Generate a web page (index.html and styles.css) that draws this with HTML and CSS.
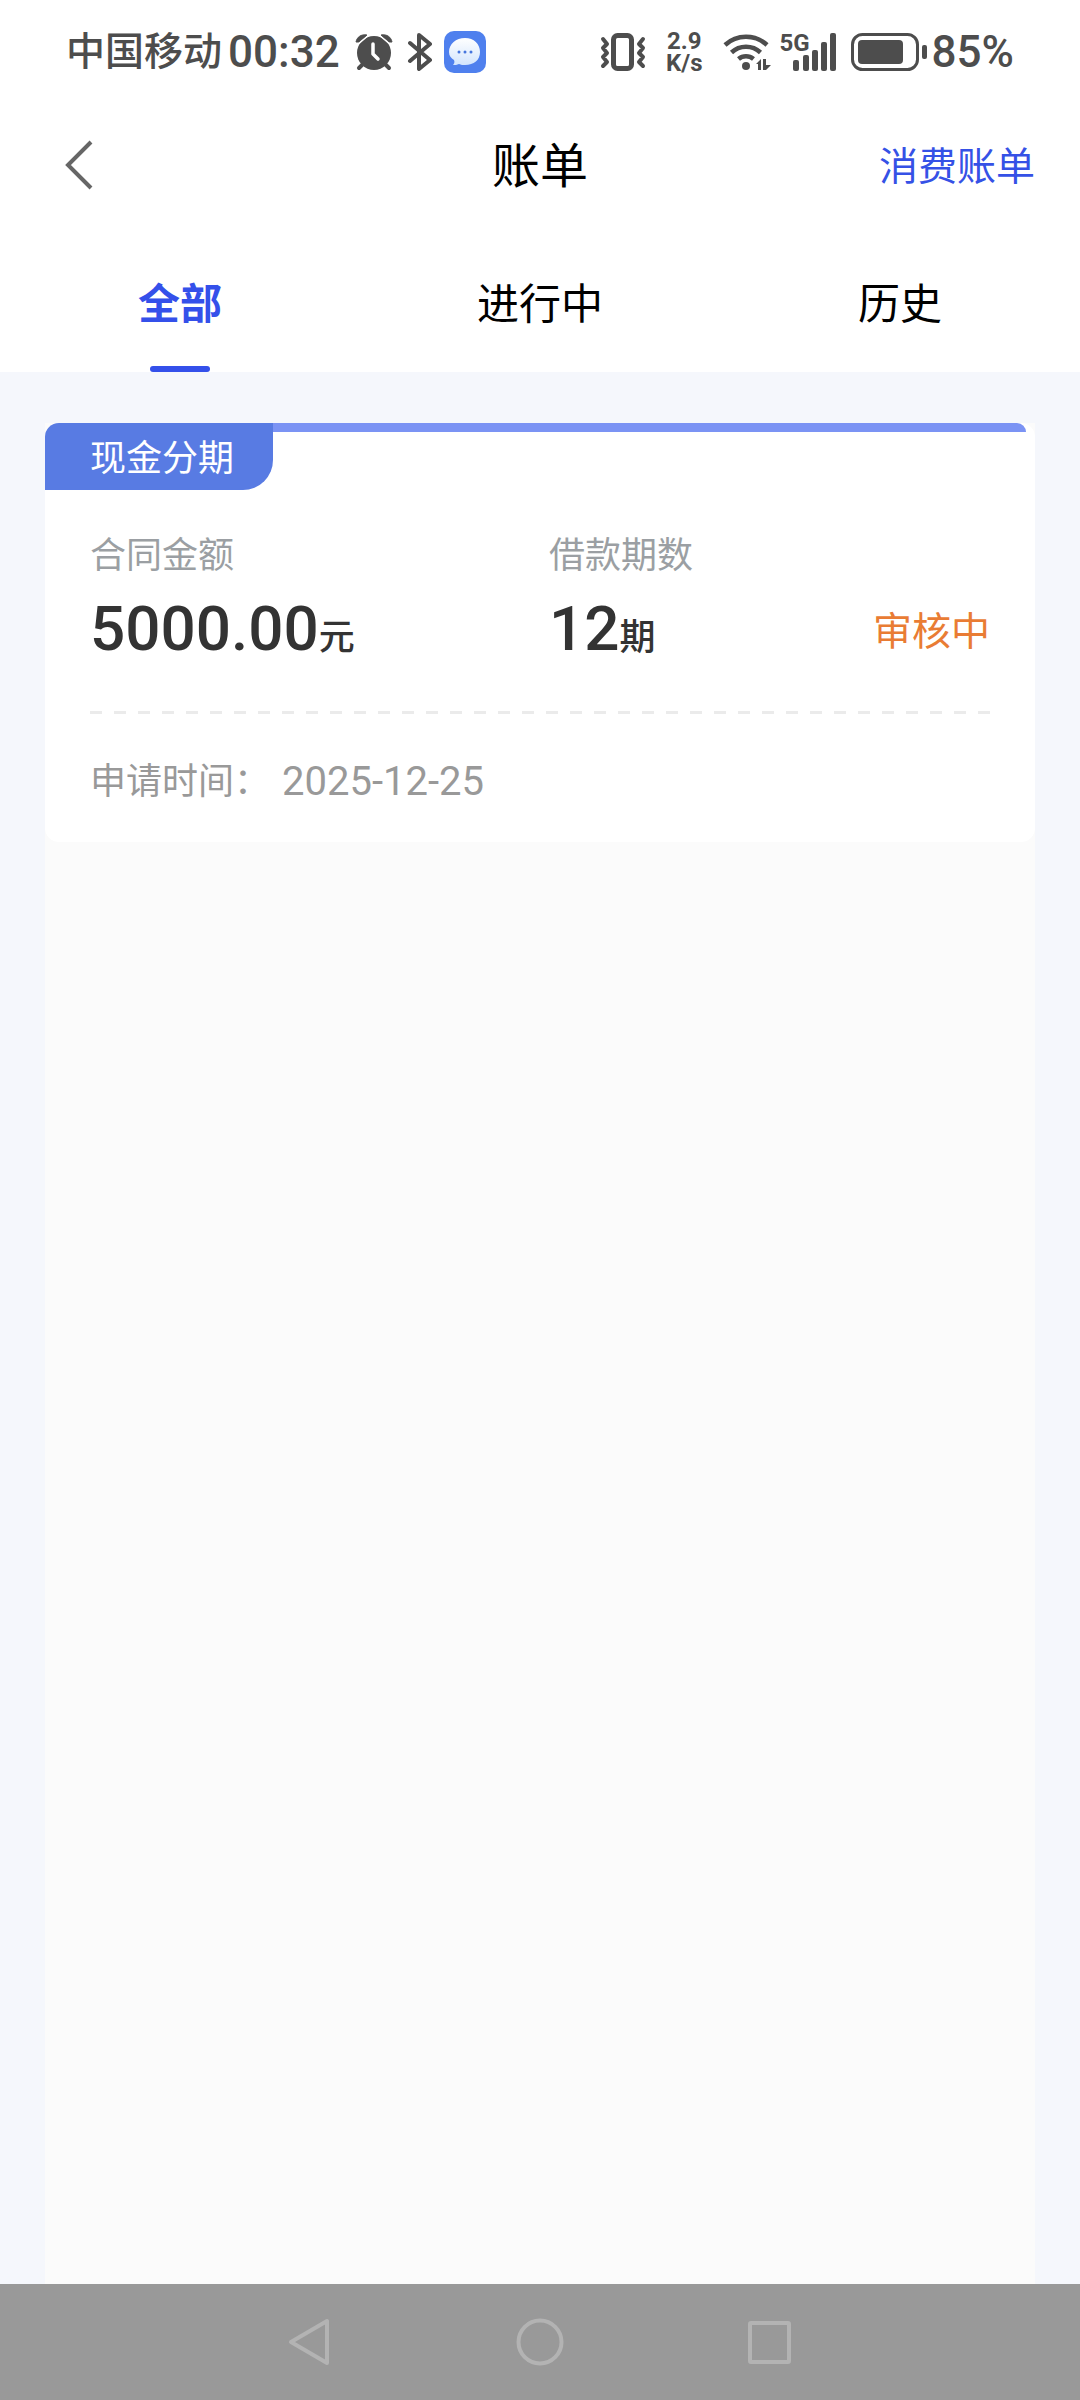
FILE: index.html
```html
<!DOCTYPE html>
<html lang="zh-CN">
<head>
<meta charset="utf-8">
<meta name="viewport" content="width=device-width, initial-scale=1">
<title>账单</title>
<link rel="stylesheet" href="styles.css">
</head>
<body>
<div class="screen">
  <div class="status-bar">
    <div class="status-group">
      <span class="carrier">中国移动</span>
      <span class="status-text clock">00:32</span>
      <svg class="alarm" width="38" height="38" viewBox="0 0 38 38" aria-hidden="true">
        <circle cx="19" cy="20" r="17" fill="currentColor"/>
        <path d="M1 9C2 4 6 1 12 2L10 4 4 9zM37 9C36 4 32 1 26 2l2 2 6 5z" fill="currentColor" stroke="currentColor" stroke-linejoin="round"/>
        <path d="M1 13L15 1M37 13L23 1" stroke="#fff" stroke-width="1.500"/>
        <path d="M7 32l-3 3M31 32l3 3" stroke="currentColor" stroke-width="4" stroke-linecap="round"/>
        <path d="M18 11v10l5 5" fill="none" stroke="#fff" stroke-width="3.500" stroke-linecap="round" stroke-linejoin="round"/>
      </svg>
      <svg class="bluetooth" width="26" height="38" viewBox="0 0 26 38" aria-hidden="true">
        <path d="M3 10l20 17-11 9V2l11 9L3 28" fill="none" stroke="currentColor" stroke-width="4" stroke-linecap="round" stroke-linejoin="round"/>
      </svg>
      <svg class="message" width="42" height="42" viewBox="0 0 42 42" aria-hidden="true">
        <defs><linearGradient id="bubble" x1="0" y1="0" x2="0" y2="1"><stop offset="0" stop-color="#fff"/><stop offset="1" stop-color="#d3e5fd"/></linearGradient></defs>
        <rect width="42" height="42" rx="10" fill="#4f80ee"/>
        <path d="M21 7c9 0 15 6 15 14s-6 13-15 13c-2 0-4 0-6-1-2 1-4 1-6 1 1-1 2-3 1-5-3-2-5-4-5-8C5 13 12 7 21 7z" fill="url(#bubble)"/>
        <circle cx="15" cy="21" r="1.500" fill="#4575de"/><circle cx="21" cy="21" r="1.500" fill="#4575de"/><circle cx="27" cy="21" r="1.500" fill="#4575de"/>
      </svg>
    </div>
    <div class="status-group">
      <svg class="vibrate" width="46" height="40" viewBox="0 0 46 40" fill="none" stroke="currentColor" aria-hidden="true">
        <rect x="13.500" y="3.500" width="18" height="33" rx="4" stroke-width="5"/>
        <path d="M3 7l4 5-4 4 4 5-4 4 4 5-4 4M43 7l-4 5 4 4-4 5 4 4-4 5 4 4" stroke-width="4" stroke-linejoin="round" stroke-linecap="round"/>
      </svg>
      <span class="speed">2.9<br>K/s</span>
      <svg class="wifi" width="48" height="38" viewBox="0 0 48 38" aria-hidden="true">
        <path d="M2 12a31 31 0 0 1 42 0M8.500 19.500a21 21 0 0 1 29 0M15.500 26a11.500 11.500 0 0 1 15 0" fill="none" stroke="currentColor" stroke-width="4.500"/>
        <circle cx="23" cy="33" r="4" fill="currentColor"/>
        <path d="M33 31l5-5v11h-3v-6zM40 26h3v6h5l-5 5h-3z" fill="currentColor"/>
      </svg>
      <span class="signal">
        <span class="network">5G</span>
        <svg class="bars" width="44" height="38" viewBox="0 0 44 38" fill="currentColor" aria-hidden="true">
          <rect x="0" y="27" width="6" height="11" rx="2"/><rect x="10" y="22" width="6" height="16" rx="2"/><rect x="19" y="17" width="6" height="21" rx="2"/><rect x="28" y="9" width="6" height="29" rx="2"/><rect x="37" y="0" width="6" height="38" rx="2"/>
        </svg>
      </span>
      <svg class="battery" width="76" height="38" viewBox="0 0 76 38" aria-hidden="true">
        <rect x="1.500" y="1.500" width="65" height="35" rx="10" fill="none" stroke="currentColor" stroke-width="3"/>
        <rect x="7" y="7" width="45" height="24" rx="4" fill="currentColor"/>
        <rect x="71" y="12" width="5" height="14" rx="2" fill="currentColor"/>
      </svg>
      <span class="status-text">85%</span>
    </div>
  </div>

  <header class="app-bar">
    <button class="back" type="button" aria-label="返回">
      <svg width="30" height="50" viewBox="0 0 30 50" aria-hidden="true"><path d="M26 2L3 25l23 23" fill="none" stroke="#666" stroke-width="4"/></svg>
    </button>
    <h1 class="title">账单</h1>
    <a class="link" href="#">消费账单</a>
  </header>

  <nav class="tabs">
    <button class="tab tab-active" type="button">全部</button>
    <button class="tab" type="button">进行中</button>
    <button class="tab" type="button">历史</button>
  </nav>

  <main class="content">
    <div class="list">
      <article class="card">
        <div class="card-top"><span class="badge">现金分期</span><span class="stripe"></span></div>
        <div class="details">
          <div class="field">
            <span class="label">合同金额</span>
            <span class="value"><span class="number">5000.00</span><span>元</span></span>
          </div>
          <div class="field">
            <span class="label">借款期数</span>
            <span class="value"><span class="number">12</span><span>期</span></span>
          </div>
          <span class="state">审核中</span>
        </div>
        <div class="divider"></div>
        <p class="applied"><span>申请时间：</span><time class="date" datetime="2025-12-25">2025-12-25</time></p>
      </article>
    </div>
  </main>

  <footer class="system-nav">
    <button class="system-key" type="button" aria-label="返回上一页">
      <svg width="48" height="48" viewBox="0 0 48 48" aria-hidden="true"><path d="M41 3v42L5 24z"/></svg>
    </button>
    <button class="system-key" type="button" aria-label="主屏幕">
      <svg width="48" height="48" viewBox="0 0 48 48" aria-hidden="true"><circle cx="24" cy="24" r="21.500"/></svg>
    </button>
    <button class="system-key" type="button" aria-label="最近任务">
      <svg width="48" height="48" viewBox="0 0 48 48" aria-hidden="true"><rect x="4" y="5" width="39" height="39" rx="1"/></svg>
    </button>
  </footer>
</div>
</body>
</html>
```
FILE: styles.css
```css
* { box-sizing: border-box; }

body {
  margin: 0;
  background: #f5f7fc;
  color: #000;
  font-family: Roboto, "Noto Sans CJK SC", sans-serif;
}

button {
  padding: 0;
  border: 0;
  background: none;
  color: inherit;
  font: inherit;
}

svg { display: block; flex: none; }

.screen {
  display: flex;
  flex-direction: column;
  min-height: 100vh;
}

/* Status bar */
.status-bar {
  display: flex;
  justify-content: space-between;
  height: 104px;
  padding: 0 66px;
  background: #fff;
  color: #4d4d4d;
}

.status-group {
  display: flex;
  align-items: center;
}

.carrier {
  font-size: 39px;
  font-weight: 500;
  line-height: 48px;
}

.status-text {
  font-size: 44px;
  font-weight: 500;
  line-height: 48px;
}

.clock { margin-left: 6px; }
.alarm { margin-left: 15px; }
.bluetooth { margin-left: 14px; }
.message { margin-left: 11px; }

.speed {
  margin-left: 20px;
  font-size: 24px;
  font-weight: 700;
  line-height: 22px;
  text-align: center;
}

.wifi { margin-left: 20px; }

.signal {
  position: relative;
  margin-left: 22px;
}

.network {
  position: absolute;
  top: 0;
  left: -13px;
  font-size: 24px;
  font-weight: 700;
  line-height: 20px;
}

.battery { margin: 0 5px 0 14px; }

/* App bar */
.app-bar {
  display: grid;
  grid-template-columns: 1fr auto 1fr;
  align-items: center;
  height: 122px;
  padding: 0 45px 0 65px;
  background: #fff;
}

.back { justify-self: start; }

.title {
  margin: 0 0 0 -20px;
  padding-top: 4px;
  font-size: 48px;
  font-weight: 400;
  line-height: 60px;
}

.link {
  justify-self: end;
  padding-top: 4px;
  color: #3551e6;
  font-size: 39px;
  line-height: 60px;
  text-decoration: none;
}

/* Tabs */
.tabs {
  display: grid;
  grid-template-columns: repeat(3, 1fr);
  height: 146px;
  background: #fff;
}

.tab {
  display: flex;
  flex-direction: column;
  align-items: center;
  justify-content: flex-end;
  gap: 31px;
  font-size: 42px;
  line-height: 60px;
}

.tab::after {
  width: 60px;
  height: 6px;
  border-radius: 3px;
  content: "";
}

.tab-active {
  color: #3450ea;
  font-weight: 700;
}

.tab-active::after { background: #3450ea; }

/* Bill list */
.content {
  display: flex;
  flex: 1;
  padding: 51px 45px 0;
}

.list {
  flex: 1;
  background: #fbfbfb;
}

.card {
  padding-bottom: 30px;
  border-radius: 14px;
  background: #fff;
}

.card-top {
  display: flex;
  height: 67px;
  padding-right: 9px;
}

.badge {
  padding: 6px 39px 0 45px;
  border-radius: 14px 0 30px 0;
  background: #587be3;
  color: #fff;
  font-size: 36px;
  line-height: 60px;
}

.stripe {
  flex: 1;
  height: 9px;
  border-radius: 0 9px 0 0;
  background: #7b93f4;
}

.details {
  display: grid;
  grid-template-columns: 51% 1fr auto;
  padding: 36px 45px 0;
}

.field {
  display: flex;
  flex-direction: column;
  gap: 7px;
}

.label {
  color: #9b9fa3;
  font-size: 36px;
  line-height: 60px;
}

.value {
  display: flex;
  align-items: baseline;
  height: 72px;
  color: #333;
  font-size: 36px;
  font-weight: 500;
  line-height: 72px;
}

.number { font-size: 62px; }

.state {
  align-self: end;
  margin-bottom: 3px;
  color: #e97c34;
  font-size: 39px;
  line-height: 60px;
}

.divider {
  height: 3px;
  margin: 46px 45px 0;
  background: repeating-linear-gradient(90deg, #ebebeb 0 12px, transparent 12px 24px);
}

.applied {
  display: flex;
  align-items: center;
  gap: 12px;
  margin: 38px 45px 0;
  color: #999;
  font-size: 36px;
  line-height: 60px;
}

.date { font-size: 40px; }

/* System navigation */
.system-nav {
  display: flex;
  align-items: center;
  justify-content: center;
  gap: 120px;
  height: 116px;
  background: #999;
}

.system-key {
  display: flex;
  justify-content: center;
  width: 110px;
}

.system-key svg {
  fill: none;
  stroke: #b3b3b3;
  stroke-width: 4;
  stroke-linejoin: round;
}
```
